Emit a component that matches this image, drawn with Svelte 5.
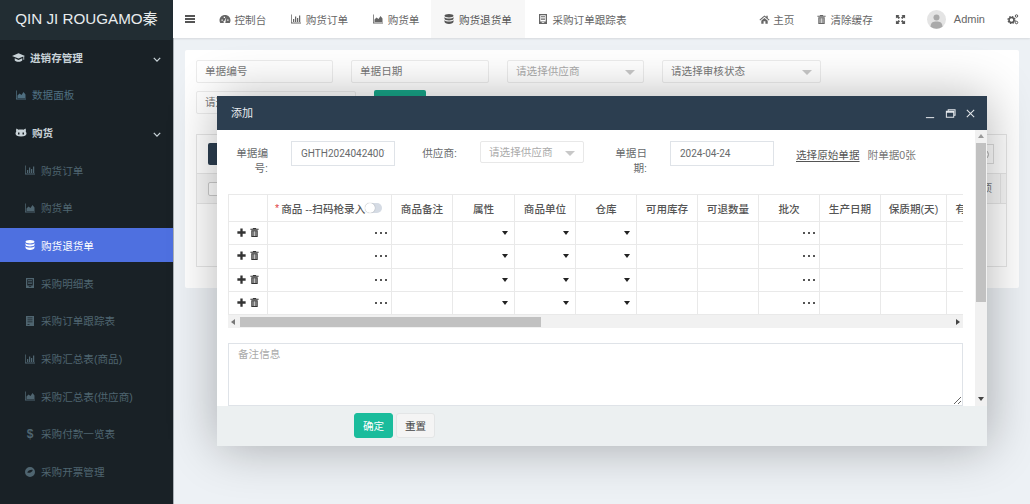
<script>
  const icons = {
    bar: 'M2 3h1.500v16H22v2H2zM6 12h2.500v6H6zM10 7h2.500v11H10zM14 10h2.500v8H14zM18 5h2.500v13H18z',
    area: 'M2 3h1.500v16H22v2H2zM5 18v-5l4-4 4 3 4-6 4 5v7z',
    db: 'M12 2c5 0 9 1.500 9 3.500S17 9 12 9 3 7.500 3 5.500 7 2 12 2zM3 8c1 2 5 3 9 3s8-1 9-3v3.500c0 2-4 3.500-9 3.500s-9-1.500-9-3.500zM3 14c1 2 5 3 9 3s8-1 9-3v3.500c0 2-4 4.500-9 4.500s-9-2.500-9-4.500z',
    cap: 'M12 4 0 9l12 5 9-3.800V16h1.500V9.500L24 9zM5 13.500V17c0 1.500 3.500 3 7 3s7-1.500 7-3v-3.500l-7 3z',
    cat: 'M3 5l4 2.500C9 7 15 7 17 7.500L21 5c1 2 1 5 .5 6 .7 1 1.500 2.500 1.500 4 0 4-4 6-11 6S1 19 1 15c0-1.500.8-3 1.500-4C2 10 2 7 3 5zM6 13v4h3v-4zM15 13v4h3v-4z',
    doc: 'M4 2h16v20H4zM6.500 4.500V17h11V4.500zM8 6.500h8V8H8zM8 9.500h8V11H8zM8 12.500h8V14H8zM9.500 18.500v1.500h5v-1.500z',
    building: 'M4 2h16v20H4zM7 5h10v1.500H7zM7 9h10v1.500H7zM7 13h10v1.500H7zM7 18v1.500h4V18z',
    compass: 'M12 2a10 10 0 1 0 0 20 10 10 0 0 0 0-20zM6.500 13c1-3.500 7-6.500 11-5-1 4.500-7 7-11 5z',
    gauge: 'M12 4C6 4 1 8.500 1 14.500c0 2 .6 3.700 1.500 5.500h19c.9-1.800 1.500-3.500 1.500-5.500C23 8.500 18 4 12 4zM5 13v2.500h2.500V13zM16.500 13v2.500H19V13zM9.500 7.500V10H12V7.500zM14.500 9 11 15.500a2.200 2.200 0 1 0 2 1z',
    home: 'M12 3 1 12.500 2.500 14 12 6l9.500 8 1.500-1.500-4-3.400V4h-3v2.500zM5 14.500l7-6 7 6V21h-5v-5h-4v5H5z',
    trash: 'M9 2h6l1 2h5v2H3V4h5zM5 7h14v15H5zM8 9.500v10h1.500v-10zM11.250 9.500v10h1.500v-10zM14.500 9.500v10H16v-10z',
    expand: 'M2 2h8L7.500 4.500 11 8 8 11 4.500 7.500 2 10zM22 2v8l-2.500-2.500L16 11l-3-3 3.500-3.500L14 2zM2 22v-8l2.500 2.500L8 13l3 3-3.500 3.500L10 22zM22 22h-8l2.500-2.500L13 16l3-3 3.500 3.500L22 14z',
    plus: 'M9.500 3h5v6.500H21v5h-6.500V21h-5v-6.500H3v-5h6.500z'
  };

  const menu = [
    { label: '进销存管理', icon: 'cap', top: true, arrow: true },
    { label: '数据面板', icon: 'area', flat: true },
    { label: '购货', icon: 'cat', top: true, arrow: true, pet: true },
    { label: '购货订单', icon: 'bar' },
    { label: '购货单', icon: 'area' },
    { label: '购货退货单', icon: 'db', active: true },
    { label: '采购明细表', icon: 'doc' },
    { label: '采购订单跟踪表', icon: 'building' },
    { label: '采购汇总表(商品)', icon: 'bar' },
    { label: '采购汇总表(供应商)', icon: 'area' },
    { label: '采购付款一览表', icon: 'dollar' },
    { label: '采购开票管理', icon: 'compass' }
  ];

  const tabs = [
    { label: '控制台', icon: 'gauge' },
    { label: '购货订单', icon: 'bar' },
    { label: '购货单', icon: 'area' },
    { label: '购货退货单', icon: 'db', active: true },
    { label: '采购订单跟踪表', icon: 'doc' }
  ];

  const columns = [
    { w: 39, kind: 'ops' },
    { w: 124, kind: 'dots', goods: true },
    { w: 61, label: '商品备注' },
    { w: 62, label: '属性', kind: 'caret' },
    { w: 61, label: '商品单位', kind: 'caret' },
    { w: 61, label: '仓库', kind: 'caret' },
    { w: 61, label: '可用库存' },
    { w: 61, label: '可退数量' },
    { w: 61, label: '批次', kind: 'dots' },
    { w: 61, label: '生产日期' },
    { w: 66, label: '保质期(天)' },
    { w: 50, label: '有效期' }
  ];
  const rows = [1, 2, 3, 4];
</script>

{#snippet icon(name)}
  <svg class="icon" viewBox="0 0 24 24" aria-hidden="true"><path fill-rule="evenodd" d={icons[name]} /></svg>
{/snippet}

<div class="page">
  <aside class="sidebar">
    <div class="logo">QIN JI ROUGAMO秦</div>
    <nav class="menu">
      {#each menu as item}
        <a class="item" class:top={item.top} class:pet={item.pet} class:flat={item.flat} class:active={item.active}>
          {#if item.icon === 'dollar'}
            <span class="glyph">$</span>
          {:else}
            {@render icon(item.icon)}
          {/if}
          <span>{item.label}</span>
          {#if item.arrow}
            <svg class="chevron" viewBox="0 0 10 6"><path d="M1 1l4 4 4-4" /></svg>
          {/if}
        </a>
      {/each}
    </nav>
  </aside>

  <div class="main">
    <header class="topbar">
      <button class="burger" aria-label="菜单"><i></i><i></i><i></i></button>
      <nav class="tabs">
        {#each tabs as tab}
          <a class="tab" class:active={tab.active}>{@render icon(tab.icon)}{tab.label}</a>
        {/each}
      </nav>
      <div class="tools">
        <a class="tool home">{@render icon('home')}主页</a>
        <a class="tool cache">{@render icon('trash')}清除缓存</a>
        <a class="tool full">{@render icon('expand')}</a>
        <span class="avatar">
          <svg viewBox="0 0 24 24"><circle cx="12" cy="12" r="12" fill="#e4e4e4" /><circle cx="12" cy="9.500" r="3.800" fill="#aaa" /><path d="M4.500 21c0-5 3-6.500 7.500-6.500s7.500 1.500 7.500 6.500a12 12 0 0 1-15 0z" fill="#aaa" /></svg>
        </span>
        <span class="user">Admin</span>
        <svg class="cogs" viewBox="0 0 24 24" fill="none" stroke="#555">
          <circle cx="9" cy="14" r="5" stroke-width="3" />
          <circle cx="9" cy="14" r="7" stroke-width="2.500" stroke-dasharray="3 2.500" />
          <circle cx="19" cy="6" r="2.500" stroke-width="2" />
          <circle cx="19" cy="19" r="2.500" stroke-width="2" />
        </svg>
      </div>
    </header>

    <section class="content">
      <div class="card">
        <div class="filters">
          <div class="field w137">单据编号</div>
          <div class="field w138">单据日期</div>
          <div class="field w137 select muted">请选择供应商<b></b></div>
          <div class="field w159 select">请选择审核状态<b></b></div>
          <div class="field w160">请选择</div>
          <div class="search"></div>
        </div>
        <div class="grid-box">
          <div class="grid-tools"><span class="dark-btn"></span><span class="round-btn"><i></i></span></div>
          <div class="grid-head"><span class="check"></span><span class="head-end">项</span></div>
          <div class="grid-body"></div>
        </div>
      </div>
    </section>
  </div>

  <div class="modal">
    <div class="modal-title">
      <span>添加</span>
      <div class="win">
        <svg viewBox="0 0 12 12"><path d="M1 10.500h9" /></svg>
        <svg viewBox="0 0 12 12"><path d="M1.500 3.500h8v6.500h-8zM1.500 4.500h8M3.500 3.500V1.800h7.500v6h-1.500" /></svg>
        <svg viewBox="0 0 12 12"><path d="M2 2l8 8M10 2l-8 8" /></svg>
      </div>
    </div>
    <div class="modal-body">
      <div class="form">
        <div class="form-row">
          <label class="lbl l40">单据编号:</label>
          <input class="input w104" readonly value="GHTH202404240012" />
          <label class="lbl l60">供应商:</label>
          <div class="select-in w104">请选择供应商<b></b></div>
          <label class="lbl l40">单据日期:</label>
          <input class="input w104" readonly value="2024-04-24" />
          <a class="link">选择原始单据</a>
          <span class="attach">附单据0张</span>
        </div>

        <div class="table-wrap">
          <table>
            <colgroup>
              {#each columns as c}<col style="width:{c.w}px" />{/each}
            </colgroup>
            <thead>
              <tr>
                {#each columns as c}
                  <th>
                    {#if c.goods}
                      <div class="goods"><em>*</em> 商品 --扫码枪录入<span class="toggle"><i></i></span></div>
                    {:else}
                      {c.label ?? ''}
                    {/if}
                  </th>
                {/each}
              </tr>
            </thead>
            <tbody>
              {#each rows as r}
                <tr>
                  {#each columns as c}
                    <td>
                      {#if c.kind === 'ops'}
                        <div class="ops">
                          <svg class="op" viewBox="0 0 24 24"><path d={icons.plus} /></svg>
                          <svg class="op" viewBox="0 0 24 24"><path fill-rule="evenodd" d={icons.trash} /></svg>
                        </div>
                      {:else if c.kind === 'dots'}
                        <div class="dots"><i></i><i></i><i></i></div>
                      {:else if c.kind === 'caret'}
                        <div class="caret"><b></b></div>
                      {/if}
                    </td>
                  {/each}
                </tr>
              {/each}
            </tbody>
          </table>
        </div>
        <div class="hbar">
          <span class="arrow left"></span>
          <span class="hthumb"></span>
          <span class="arrow right"></span>
        </div>

        <textarea class="remark" placeholder="备注信息"></textarea>
      </div>
      <div class="vbar">
        <span class="arrow up"></span>
        <span class="vthumb"></span>
        <span class="arrow down"></span>
      </div>
    </div>
    <div class="modal-foot">
      <button class="btn ok">确定</button>
      <button class="btn reset">重置</button>
    </div>
  </div>
</div>

<style>
  :global(body) {
    margin: 0;
    font-family: "Liberation Sans", "Noto Sans CJK SC", sans-serif;
  }

  .page {
    width: 1030px;
    height: 504px;
    display: flex;
    position: relative;
    overflow: hidden;
    background: #edf1f5;
    font-size: 10.6px;
    color: #676a6c;
  }

  .icon { width: 12px; height: 12px; fill: currentColor; flex-shrink: 0; }

  /* sidebar */
  .sidebar { width: 173px; flex-shrink: 0; background: #192126; border-right: 1px solid #aab0b5; box-sizing: content-box; margin-right: -1px; }
  .logo {
    height: 40px;
    line-height: 38px;
    background: #222d33;
    color: #e8ecee;
    font-size: 15.200px;
    text-align: center;
    white-space: nowrap;
  }
  .menu { display: flex; flex-direction: column; gap: 3.700px; }
  .item {
    height: 34px;
    display: flex;
    align-items: center;
    gap: 5px;
    padding-left: 24px;
    color: #4f6570;
  }
  .glyph { width: 12px; text-align: center; font-weight: 700; font-size: 12px; }
  .item.top { padding-left: 12px; color: #c9d3d8; font-weight: 700; gap: 5px; position: relative; }
  .item.top .icon { width: 13px; height: 13px; }
  .item.pet { padding-left: 15px; gap: 5px; }
  .item.pet .icon { width: 12px; height: 12px; }
  .item.flat { padding-left: 15px; color: #4f6f80; gap: 5px; }
  .item.active { background: #4e70e0; color: #fff; }
  .chevron {
    position: absolute;
    right: 12px;
    top: 17px;
    width: 8px;
    height: 5px;
    fill: none;
    stroke: #c9d3d8;
    stroke-width: 1.600;
  }

  /* top bar */
  .main { flex: 1; min-width: 0; display: flex; flex-direction: column; }
  .topbar {
    height: 38px;
    flex-shrink: 0;
    display: flex;
    align-items: stretch;
    background: #fff;
    box-shadow: 0 1px 2px rgba(0, 0, 0, .1);
    position: relative;
  }
  .burger {
    width: 10px;
    margin-left: 12px;
    padding: 0;
    border: 0;
    background: none;
    display: flex;
    flex-direction: column;
    justify-content: center;
    gap: 1.800px;
  }
  .burger i { display: block; height: 1.300px; width: 10px; background: #555; }
  .tabs { display: flex; margin-left: 12px; }
  .tab { display: flex; align-items: center; gap: 3.500px; padding: 0 12px; color: #666; white-space: nowrap; }
  .tab.active { background: #f7f7f7; padding: 0 13px 0 12px; color: #555; }
  .tools { margin-left: auto; display: flex; align-items: center; padding-right: 11px; color: #666; }
  .tool { display: flex; align-items: center; gap: 3px; }
  .tool .icon { width: 11px; height: 11px; }
  .cache { margin-left: 22px; }
  .full { margin-left: 22px; color: #555; }
  .avatar { width: 19px; height: 19px; margin-left: 21px; }
  .avatar svg { display: block; width: 19px; height: 19px; }
  .user { margin-left: 8px; font-size: 11px; }
  .cogs { width: 12px; height: 12px; margin-left: 22px; }

  /* page behind the dialog */
  .content { flex: 1; padding: 12px 11px 0 12px; }
  .card {
    height: 238px;
    box-sizing: border-box;
    background: #fff;
    border-radius: 2px;
    padding: 10px 12px 21px 11px;
    display: flex;
    flex-direction: column;
  }
  .filters { display: flex; flex-wrap: wrap; gap: 8px 18px; width: 700px; align-content: flex-start; }
  .field {
    height: 23px;
    box-sizing: border-box;
    border: 1px solid #ececec;
    border-radius: 2px;
    padding-left: 8px;
    line-height: 21px;
    color: #777;
    position: relative;
  }
  .w137 { width: 137px; }
  .w138 { width: 138px; }
  .w159 { width: 159px; }
  .w160 { width: 160px; }
  .muted { color: #aaa; }
  .select b, .select-in b {
    position: absolute;
    right: 8px;
    top: 9px;
    border: 5px solid transparent;
    border-top-color: #c8c8c8;
    border-bottom: 0;
  }
  .search { width: 52px; height: 24px; margin-top: -1px; background: #18a689; border-radius: 2px; }
  .grid-box { margin-top: 20px; flex: 1; border: 1px solid #e6e6e6; display: flex; flex-direction: column; }
  .grid-tools { height: 38px; flex-shrink: 0; display: flex; justify-content: space-between; align-items: center; padding: 0 11px; border-bottom: 1px solid #e6e6e6; }
  .dark-btn { width: 24px; height: 22px; background: #2c3e50; border-radius: 2px; }
  .round-btn { width: 20px; height: 20px; border: 1px solid #ddd; box-sizing: border-box; display: flex; align-items: center; justify-content: center; margin-right: 1px; }
  .round-btn i { width: 9px; height: 9px; border: 1.500px solid #aaa; border-radius: 50%; box-sizing: border-box; }
  .grid-head { height: 29px; flex-shrink: 0; background: #f7f7f7; border-bottom: 1px solid #e6e6e6; display: flex; align-items: center; justify-content: space-between; padding-left: 11px; }
  .check { width: 12px; height: 12px; border: 1px solid #ccc; border-radius: 2px; background: #fff; }
  .head-end { height: 100%; line-height: 29px; padding-right: 8px; border-right: 1px solid #e6e6e6; margin-right: 5px; color: #777; }
  .grid-body { flex: 1; }

  /* dialog */
  .modal {
    position: absolute;
    left: 217px;
    top: 96px;
    width: 770px;
    height: 350px;
    display: flex;
    flex-direction: column;
    background: #fff;
    border-radius: 2px;
    box-shadow: 1px 1px 50px rgba(0, 0, 0, .3);
  }
  .modal-title {
    height: 34px;
    flex-shrink: 0;
    box-sizing: border-box;
    display: flex;
    align-items: center;
    justify-content: space-between;
    padding: 0 11px 2px 14px;
    background: #2c3e50;
    color: #e9edf0;
    font-size: 11px;
  }
  .win { display: flex; gap: 9px; margin-top: 2px; }
  .win svg { width: 11px; height: 11px; fill: none; stroke: #e4e8eb; stroke-width: 1.100; }

  .modal-body { flex: 1; min-height: 0; display: flex; overflow: hidden; }
  .form { flex: 1; min-width: 0; padding: 11px 12px 0 11px; overflow: hidden; }
  .form-row { display: flex; align-items: flex-start; height: 53px; }
  .lbl { padding-top: 5px; line-height: 15px; text-align: right; color: #676a6c; margin-right: 23px; flex-shrink: 0; }
  .l40 { width: 40px; }
  .l60 { width: 60px; margin-left: 2px; }
  .input {
    height: 25px;
    box-sizing: border-box;
    border: 1px solid #dfe3e8;
    padding: 0 9px;
    font-family: Roboto, sans-serif;
    font-size: 10px;
    color: #676a6c;
    outline: none;
    flex-shrink: 0;
  }
  .w104 { width: 104px; }
  .select-in {
    position: relative;
    box-sizing: border-box;
    flex-shrink: 0;
    height: 22px;
    line-height: 20px;
    color: #aaa;
    border: 1px solid #e8e8e8;
    border-radius: 2px;
    padding-left: 8px;
    margin-right: 23px;
  }
  .link { margin-left: 22px; margin-top: 6px; text-decoration: underline; text-underline-offset: 2px; color: #555; }
  .attach { margin-left: 8px; margin-top: 6px; color: #777; }

  .table-wrap { width: 735px; overflow: hidden; }
  table { border-collapse: collapse; table-layout: fixed; width: 748px; }
  th, td { border: 1px solid #e9e9e9; padding: 0; text-align: center; white-space: nowrap; overflow: hidden; }
  th { height: 26px; font-weight: 500; color: #555; }
  td { height: 22.300px; }
  .goods { display: flex; align-items: center; padding-left: 7px; }
  .goods em { color: #e03c3c; font-style: normal; margin-right: 2px; }
  .toggle { width: 17px; height: 10px; border-radius: 5px; background: #d5dbe4; position: relative; flex-shrink: 0; }
  .toggle i { position: absolute; left: 0; top: 0; width: 10px; height: 10px; border-radius: 50%; background: #fff; box-shadow: 0 0 1px rgba(0, 0, 0, .4); }
  .ops { display: flex; justify-content: center; gap: 2px; margin-top: -1px; }
  .op { width: 11px; height: 11px; fill: #333; }
  .dots { display: flex; justify-content: flex-end; gap: 3px; padding-right: 4px; }
  .dots i { width: 2px; height: 2px; background: #555; }
  .caret { display: flex; justify-content: flex-end; padding-right: 6px; }
  .caret b { border: 3.500px solid transparent; border-top: 4px solid #222; border-bottom: 0; }

  .hbar { height: 13px; display: flex; align-items: center; background: #f1f1f1; position: relative; }
  .hthumb { width: 301px; height: 10px; margin-left: 5px; background: #c1c1c1; }
  .arrow { width: 0; height: 0; border: 3px solid transparent; flex-shrink: 0; }
  .arrow.left { border-right: 4px solid #777; border-left: 0; margin-left: 3px; }
  .arrow.right { border-left: 4px solid #444; border-right: 0; margin-left: auto; margin-right: 3px; }

  .remark {
    display: block;
    width: 735px;
    height: 63px;
    box-sizing: border-box;
    margin-top: 15px;
    padding: 2px 9px;
    border: 1px solid #dfe3e8;
    font: inherit;
    color: #555;
    outline: none;
  }
  .remark::placeholder { color: #aaa; }

  .vbar { width: 12px; flex-shrink: 0; background: #f1f1f1; display: flex; flex-direction: column; align-items: center; }
  .vthumb { width: 10px; height: 159px; margin-top: 5px; background: #c1c1c1; }
  .arrow.up { border-bottom: 4px solid #999; border-top: 0; margin-top: 4px; }
  .arrow.down { border-top: 4px solid #444; border-bottom: 0; margin-top: auto; margin-bottom: 5px; }

  .modal-foot {
    height: 40px;
    flex-shrink: 0;
    box-sizing: border-box;
    display: flex;
    gap: 3px;
    padding: 7px 0 0 137px;
    background: #ecf0f1;
  }
  .btn { height: 25px; padding: 0; border-radius: 3px; font: inherit; }
  .ok { width: 39px; border: 1px solid #1abc9c; background: #1abc9c; color: #fff; }
  .reset { width: 39px; border: 1px solid #e3e5e6; background: #f4f4f4; color: #444; }
</style>
